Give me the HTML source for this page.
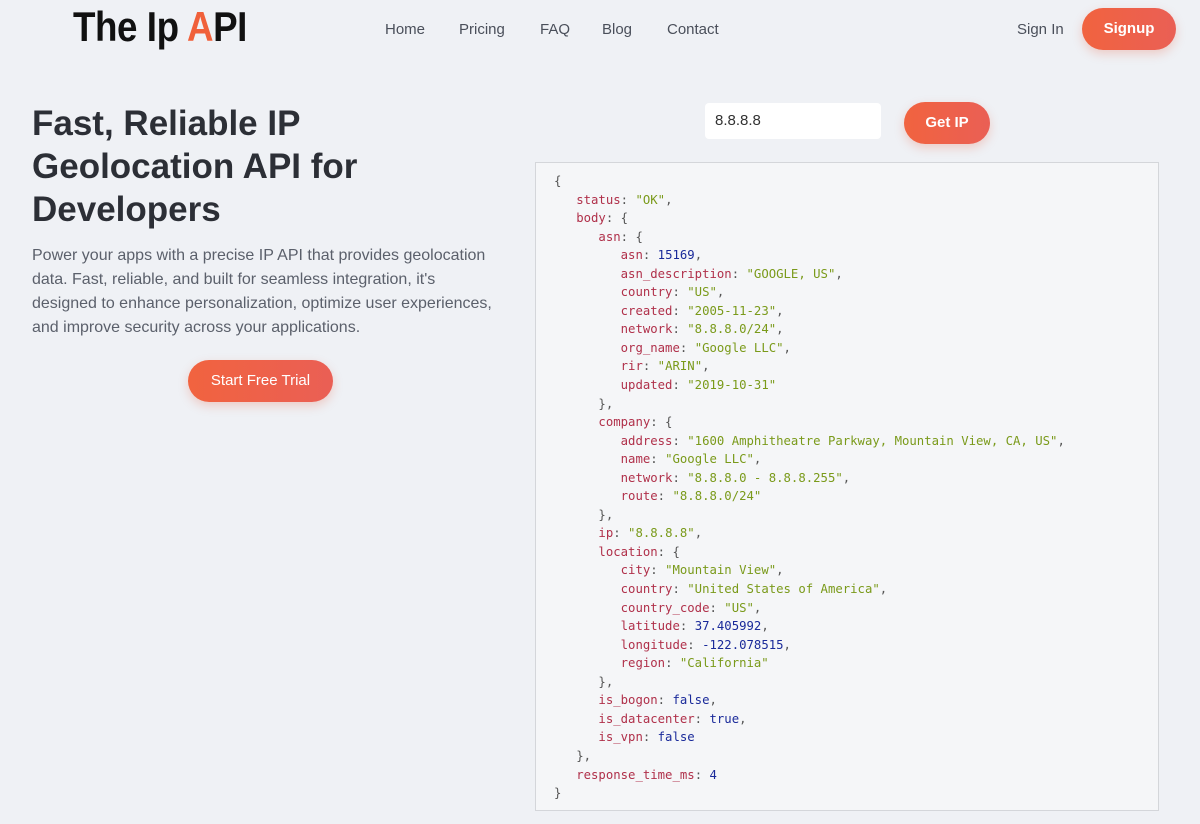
<!DOCTYPE html>
<html><head><meta charset="utf-8"><style>
*{box-sizing:border-box;margin:0;padding:0}
body{width:1200px;height:824px;overflow:hidden;background:#eff1f5;font-family:"Liberation Sans",sans-serif;position:relative}
.logo{position:absolute;left:73px;top:3px;font-size:42px;font-weight:bold;color:#111;letter-spacing:-0.5px;transform:scaleX(0.875);transform-origin:left top;white-space:nowrap}
.logo span{color:#f0603a}
.nav a{position:absolute;top:21px;font-size:15px;color:#4a4f5a;text-decoration:none}
.btn{position:absolute;border-radius:22px;background:linear-gradient(90deg,#f1633f,#ea5f55);color:#fff;font-weight:bold;font-size:15px;text-align:center;box-shadow:0 4px 10px rgba(230,90,60,.25)}
h1{position:absolute;left:32px;top:102px;font-size:35px;line-height:43px;color:#2c2f36;font-weight:bold;width:460px}
p.d{position:absolute;left:32px;top:244px;width:470px;font-size:16px;line-height:24px;color:#5b606b}
.inp{position:absolute;left:705px;top:103px;width:176px;height:36px;background:#fff;border-radius:4px;font-size:15px;color:#333;padding:9px 10px}
.code{position:absolute;left:535px;top:162px;width:624px;height:649px;background:#f5f6f8;border:1px solid #d4d6da;padding:9px 0 0 18px;font-family:"DejaVu Sans Mono","Liberation Mono",monospace;font-size:12.3px;line-height:18.55px;color:#555;white-space:pre}
.k{color:#b0304a}.s{color:#7a9a1a}.n{color:#1a2a9a}
</style></head><body>
<div class="logo">The Ip <span>A</span>PI</div>
<div class="nav"><a style="left:385px">Home</a><a style="left:459px">Pricing</a><a style="left:540px">FAQ</a><a style="left:602px">Blog</a><a style="left:667px">Contact</a><a style="left:1017px">Sign In</a></div>
<div class="btn" style="left:1082px;top:8px;width:94px;height:42px;line-height:42px">Signup</div>
<h1>Fast, Reliable IP Geolocation API for Developers</h1>
<p class="d">Power your apps with a precise IP API that provides geolocation data. Fast, reliable, and built for seamless integration, it's designed to enhance personalization, optimize user experiences, and improve security across your applications.</p>
<div class="btn" style="left:188px;top:360px;width:145px;height:42px;line-height:42px;font-weight:normal">Start Free Trial</div>
<div class="inp">8.8.8.8</div>
<div class="btn" style="left:904px;top:102px;width:86px;height:42px;line-height:42px">Get IP</div>
<div class="code">{
   <span class="k">status</span>: <span class="s">"OK"</span>,
   <span class="k">body</span>: {
      <span class="k">asn</span>: {
         <span class="k">asn</span>: <span class="n">15169</span>,
         <span class="k">asn_description</span>: <span class="s">"GOOGLE, US"</span>,
         <span class="k">country</span>: <span class="s">"US"</span>,
         <span class="k">created</span>: <span class="s">"2005-11-23"</span>,
         <span class="k">network</span>: <span class="s">"8.8.8.0/24"</span>,
         <span class="k">org_name</span>: <span class="s">"Google LLC"</span>,
         <span class="k">rir</span>: <span class="s">"ARIN"</span>,
         <span class="k">updated</span>: <span class="s">"2019-10-31"</span>
      },
      <span class="k">company</span>: {
         <span class="k">address</span>: <span class="s">"1600 Amphitheatre Parkway, Mountain View, CA, US"</span>,
         <span class="k">name</span>: <span class="s">"Google LLC"</span>,
         <span class="k">network</span>: <span class="s">"8.8.8.0 - 8.8.8.255"</span>,
         <span class="k">route</span>: <span class="s">"8.8.8.0/24"</span>
      },
      <span class="k">ip</span>: <span class="s">"8.8.8.8"</span>,
      <span class="k">location</span>: {
         <span class="k">city</span>: <span class="s">"Mountain View"</span>,
         <span class="k">country</span>: <span class="s">"United States of America"</span>,
         <span class="k">country_code</span>: <span class="s">"US"</span>,
         <span class="k">latitude</span>: <span class="n">37.405992</span>,
         <span class="k">longitude</span>: <span class="n">-122.078515</span>,
         <span class="k">region</span>: <span class="s">"California"</span>
      },
      <span class="k">is_bogon</span>: <span class="n">false</span>,
      <span class="k">is_datacenter</span>: <span class="n">true</span>,
      <span class="k">is_vpn</span>: <span class="n">false</span>
   },
   <span class="k">response_time_ms</span>: <span class="n">4</span>
}</div>
</body></html>
